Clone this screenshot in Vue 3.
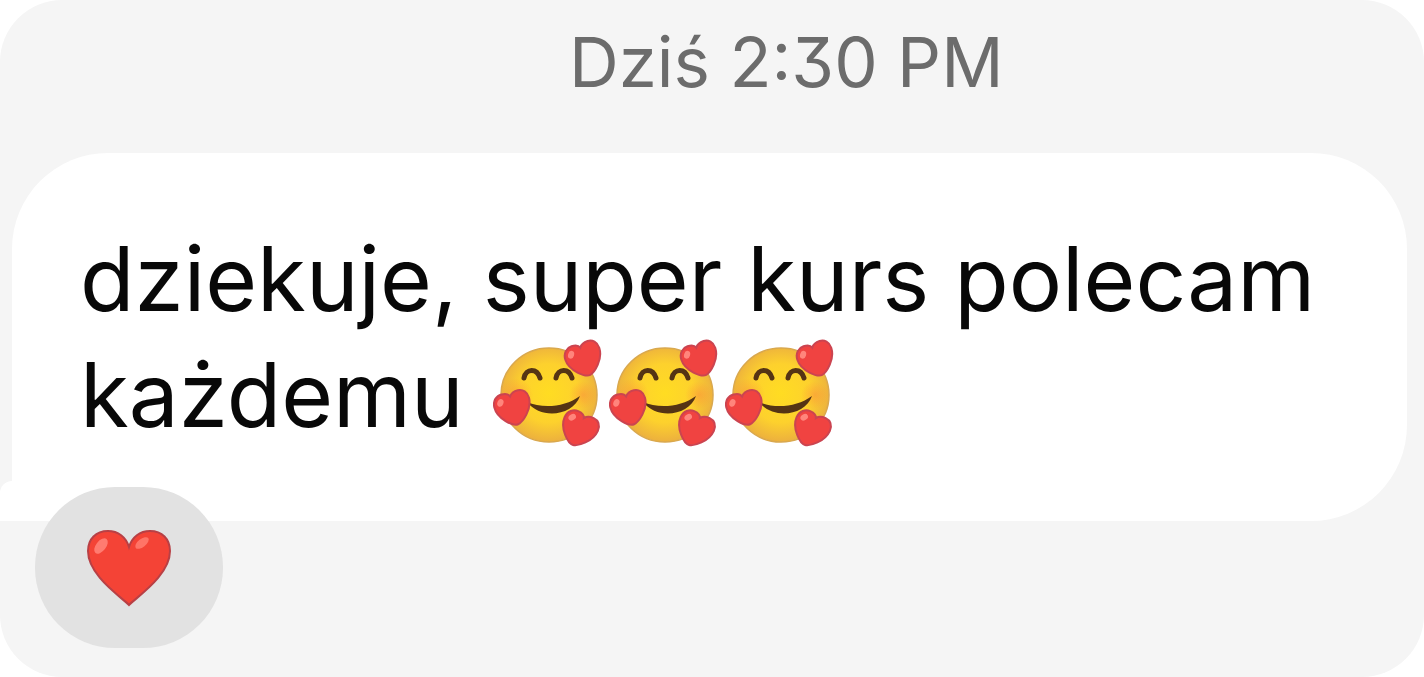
<script setup>
const smileys = [1, 2, 3]
</script>

<template>
  <main class="chat">
    <svg class="defs" aria-hidden="true">
      <defs>
        <radialGradient id="face" cx="50%" cy="48%" r="52%">
          <stop offset="0" stop-color="#ffdc22" />
          <stop offset="0.6" stop-color="#fdd12d" />
          <stop offset="1" stop-color="#ecb03e" />
        </radialGradient>
        <radialGradient id="blush">
          <stop offset="0" stop-color="#fa8a3c" stop-opacity="0.5" />
          <stop offset="1" stop-color="#fa8a3c" stop-opacity="0" />
        </radialGradient>
        <symbol id="mini-heart" viewBox="-20 -20 40 40" overflow="visible">
          <path d="M1 17C-4 18-18 7-18-5C-18-12-13-16-8-16C-4-16-1-15 0-12C2-15 5-16 9-16C14-16 18-12 18-6C18 6 6 16 1 17Z" fill="#f04341" stroke="#cb4450" stroke-width="2" />
          <ellipse cx="-11" cy="-8" rx="3" ry="4" fill="#ff857c" transform="rotate(35 -11 -8)" />
        </symbol>
      </defs>
    </svg>

    <header class="stamp"><time datetime="14:30">Dziś 2:30 PM</time></header>

    <article class="bubble">
      <p class="text">
        dziekuje, super kurs polecam każdemu
        <span class="smileys"><svg
          v-for="n in smileys"
          :key="n"
          class="smiley"
          viewBox="4 4 116 112"
          role="img"
          aria-label="🥰"
        >
          <ellipse cx="60" cy="60" rx="48" ry="47" fill="url(#face)" stroke="#d9a84e" stroke-width="1.5" />
          <circle cx="27" cy="60" r="17" fill="url(#blush)" />
          <circle cx="94" cy="60" r="14" fill="url(#blush)" />
          <path d="M35 43C37 33 48 33 51 43M67 43C69 33 80 33 83 43" fill="none" stroke="#553414" stroke-width="5" stroke-linecap="round" />
          <path d="M38 67C54 74 76 72 91 61C84 81 52 85 38 67Z" fill="#553414" />
          <use href="#mini-heart" x="-20" y="-20" width="40" height="40" transform="translate(95 24) rotate(-18)" />
          <use href="#mini-heart" x="-20" y="-20" width="40" height="40" transform="translate(24 73) rotate(-14)" />
          <use href="#mini-heart" x="-20" y="-20" width="40" height="40" transform="translate(90 94) rotate(24)" />
        </svg></span>
      </p>
    </article>

    <button class="reaction" type="button" aria-label="❤️">
      <svg class="heart" viewBox="0 0 86 78" aria-hidden="true">
        <path d="M43 76C34 67 2 46 2 22C2 10 10 2 22 2C32 2 40 8 43 18C46 8 54 2 64 2C76 2 84 10 84 22C84 46 52 67 43 76Z" fill="#f44336" stroke="#b84045" stroke-width="2" />
        <ellipse cx="15" cy="17" rx="5" ry="9" fill="#ff7b70" transform="rotate(38 15 17)" />
        <ellipse cx="56" cy="14" rx="4" ry="8" fill="#ff7467" transform="rotate(52 56 14)" />
      </svg>
    </button>
  </main>
</template>

<style>
body {
  background: #fff;
}
</style>

<style scoped>
.chat {
  box-sizing: border-box;
  min-height: 100vh;
  padding: 20px 17px 28px 12px;
  border-radius: 62px;
  overflow: hidden;
  background: #f5f5f5;
  font-family: Inter, "Noto Sans", sans-serif;
}

.defs {
  position: absolute;
  width: 0;
  height: 0;
}

.stamp {
  padding-left: 11%;
  margin-bottom: 49px;
  color: #6c6c6c;
  font-size: 69px;
  line-height: 84px;
  text-align: center;
  font-feature-settings: "cv09";
}

.bubble {
  position: relative;
  box-sizing: border-box;
  padding: 68px 64px 68px 68px;
  border-radius: 96px 96px 96px 0;
  background: #fff;
}

.bubble::before {
  content: "";
  position: absolute;
  left: -12px;
  bottom: 0;
  width: 24px;
  height: 40px;
  border-top-left-radius: 12px;
  background: #fff;
}

.text {
  margin: 0;
  color: #080808;
  font-size: 89px;
  line-height: 116px;
}

.smileys {
  margin-left: 4px;
  white-space: nowrap;
}

.smiley {
  width: 116px;
  height: 112px;
  vertical-align: -24px;
}

.reaction {
  position: relative;
  display: flex;
  align-items: center;
  justify-content: center;
  width: 188px;
  height: 161px;
  margin: -34px 0 0 23px;
  padding: 0;
  border: 0;
  border-radius: 80px;
  background: #e2e2e2;
}

.heart {
  width: 86px;
  height: 78px;
}
</style>
